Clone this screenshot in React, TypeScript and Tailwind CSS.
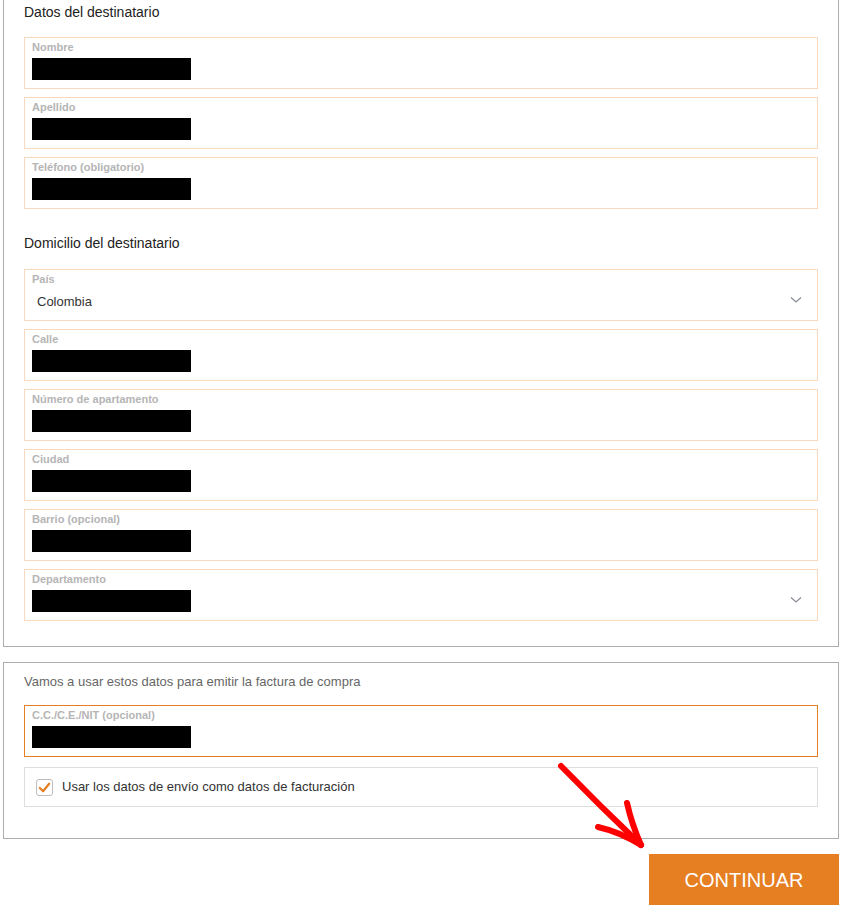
import React from 'react';

const font = { fontFamily: '"Liberation Sans", Arial, sans-serif' };

type FieldProps = {
  label: string;
  value?: string;
  select?: boolean;
  focused?: boolean;
};

const Chevron = () => (
  <svg className="absolute right-[15px] top-[26px] w-[12px] h-[8px]" viewBox="0 0 12 8" fill="none">
    <path d="M1 1.5 L6 6 L11 1.5" stroke="#8a8f99" strokeWidth="1.3" />
  </svg>
);

const Field: React.FC<FieldProps> = ({ label, value, select, focused }) => (
  <div
    className={`relative h-[52px] border bg-white pl-[7px] pt-[2px] ${
      focused ? 'border-[#e67e22]' : 'border-[#f8d9bd]'
    }`}
  >
    <div className="h-[14px] text-[11px] leading-[14px] font-bold text-[#b5b5b5]">{label}</div>
    {value ? (
      <div className="mt-[5px] pl-[5px] text-[13px] leading-[22px] text-[#333]">{value}</div>
    ) : (
      <div className="mt-[4px] h-[22px] w-[159px] bg-black" />
    )}
    {select && <Chevron />}
  </div>
);

const App: React.FC = () => {
  return (
    <div className="relative min-h-[911px] w-[844px] bg-white" style={font}>
      <div className="ml-[3px] w-[836px]">
        {/* destinatario */}
        <section className="border-x border-b border-[#adadad] px-[20px] pt-[2px] pb-[25px]">
          <h2 className="text-[14px] leading-[20px] text-[#222]">Datos del destinatario</h2>
          <div className="mt-[15px] flex flex-col gap-[8px]">
            <Field label="Nombre" />
            <Field label="Apellido" />
            <Field label="Teléfono (obligatorio)" />
          </div>

          <h2 className="mt-[24px] text-[14px] leading-[20px] text-[#222]">Domicilio del destinatario</h2>
          <div className="mt-[16px] flex flex-col gap-[8px]">
            <Field label="País" value="Colombia" select />
            <Field label="Calle" />
            <Field label="Número de apartamento" />
            <Field label="Ciudad" />
            <Field label="Barrio (opcional)" />
            <Field label="Departamento" select />
          </div>
        </section>

        {/* facturación */}
        <section className="mt-[15px] border border-[#adadad] px-[20px] pt-[11px] pb-[31px]">
          <p className="text-[13px] leading-[16px] text-[#666]">Vamos a usar estos datos para emitir la factura de compra</p>
          <div className="mt-[15px]">
            <Field label="C.C./C.E./NIT (opcional)" focused />
          </div>
          <label className="mt-[10px] flex h-[40px] items-center border border-[#dddddd] pl-[11px]">
            <span className="flex h-[17px] w-[17px] items-center justify-center rounded-[3px] border border-[#bdbdbd] bg-white">
              <svg viewBox="0 0 14 14" className="h-[13px] w-[13px]" fill="none">
                <path d="M2 7.5 L5.5 11 L12 3" stroke="#e67e22" strokeWidth="2.4" strokeLinecap="round" strokeLinejoin="round" />
              </svg>
            </span>
            <span className="ml-[9px] text-[13px] text-[#333]">Usar los datos de envío como datos de facturación</span>
          </label>
        </section>

        <div className="mt-[15px] flex justify-end">
          <button className="h-[51px] w-[190px] bg-[#e67e22] text-[20px] text-white">CONTINUAR</button>
        </div>
      </div>

      {/* red annotation arrow */}
      <svg className="pointer-events-none absolute left-0 top-0 h-[911px] w-[844px]" viewBox="0 0 844 911" fill="none">
        <g stroke="#ff0000" strokeWidth="6" strokeLinecap="round" strokeLinejoin="round">
          <path d="M561 766 Q600 806 641 845" />
          <path d="M598 827 Q620 832 641 845" />
          <path d="M627 803 Q632 825 641 845" />
        </g>
      </svg>
    </div>
  );
};

export default App;
